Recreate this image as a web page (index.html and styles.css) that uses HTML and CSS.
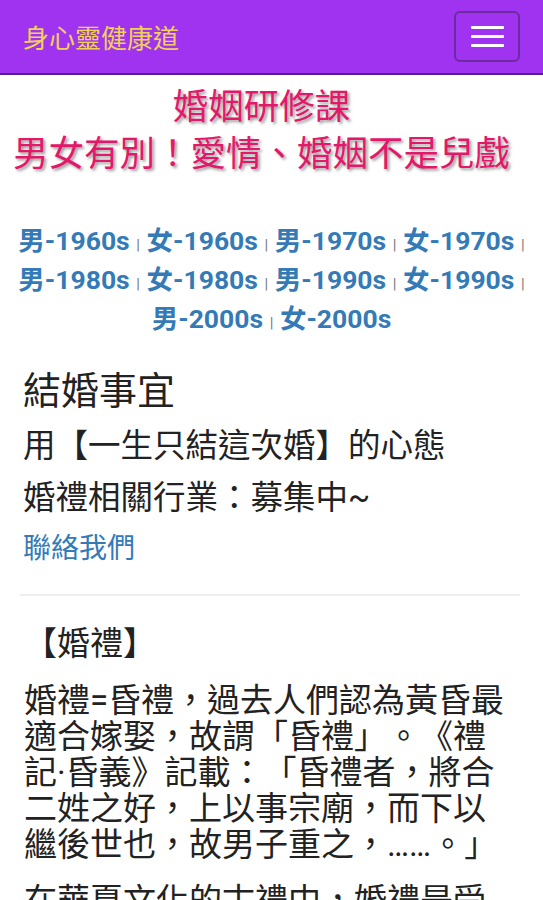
FILE: index.html
```html
<!DOCTYPE html>
<html lang="zh-Hant">
<head>
  <meta charset="UTF-8">
  <meta name="viewport" content="width=device-width, initial-scale=1">
  <title>婚姻研修課 - 身心靈健康道</title>
  <link rel="stylesheet" href="styles.css">
</head>
<body>
  <nav class="topbar">
    <a class="brand" href="#">身心靈健康道</a>
    <button class="menu-toggle" type="button" aria-label="選單">
      <span class="bar"></span>
      <span class="bar"></span>
      <span class="bar"></span>
    </button>
  </nav>

  <main class="page">
    <header class="course-title">
      <div>婚姻研修課</div>
      <div>男女有別！愛情、婚姻不是兒戲</div>
    </header>

    <div class="decade-links">
      <a href="#">男-1960s</a> <span class="sep">|</span>
      <a href="#">女-1960s</a> <span class="sep">|</span>
      <a href="#">男-1970s</a> <span class="sep">|</span>
      <a href="#">女-1970s</a> <span class="sep">|</span>
      <a href="#">男-1980s</a> <span class="sep">|</span>
      <a href="#">女-1980s</a> <span class="sep">|</span>
      <a href="#">男-1990s</a> <span class="sep">|</span>
      <a href="#">女-1990s</a> <span class="sep">|</span>
      <a href="#">男-2000s</a> <span class="sep">|</span>
      <a href="#">女-2000s</a>
    </div>

    <section class="intro">
      <h2>結婚事宜</h2>
      <p>用【一生只結這次婚】的心態</p>
      <p>婚禮相關行業：募集中~</p>
      <a class="contact" href="#">聯絡我們</a>
    </section>

    <hr class="divider">

    <section class="article">
      <h3>【婚禮】</h3>
      <p>婚禮=昏禮，過去人們認為黃昏最適合嫁娶，故謂「昏禮」。《禮記·昏義》記載：「昏禮者，將合二姓之好，上以事宗廟，而下以繼後世也，故男子重之，……。」</p>
      <p>在華夏文化的古禮中，婚禮是受到重視的一項禮儀。</p>
    </section>
  </main>
</body>
</html>
```

FILE: styles.css
```css
body {
  margin: 0;
  font-family: Roboto, "Noto Sans CJK SC", sans-serif;
  color: #222;
  background: #fff;
  text-spacing-trim: space-all;
}
a {
  color: #337ab7;
  text-decoration: none;
}

/* top bar */
.topbar {
  height: 73px;
  display: flex;
  align-items: center;
  justify-content: space-between;
  padding: 0 23px;
  background: #a033f0;
  border-bottom: 2px solid #5b1d8a;
}
.brand {
  font-family: "Noto Sans CJK SC", sans-serif;
  font-size: 26px;
  color: #f0d055;
}
.menu-toggle {
  width: 66px;
  height: 51px;
  display: flex;
  flex-direction: column;
  align-items: center;
  justify-content: center;
  gap: 6px;
  padding: 0;
  background: transparent;
  border: 2px solid #6e2aa3;
  border-radius: 6px;
}
.menu-toggle .bar {
  display: block;
  width: 33px;
  height: 3px;
  background: #fff;
  border-radius: 1px;
}

/* title */
.course-title {
  margin-top: 5px;
  padding-right: 20px;
  text-align: center;
  font-family: "Noto Sans CJK SC", sans-serif;
  font-size: 35.5px;
  line-height: 47px;
  color: #e3186b;
  text-shadow: 2px 2px 3px #999;
}

/* decade links */
.decade-links {
  margin-top: 47px;
  text-align: center;
  font-size: 26.5px;
  font-weight: bold;
  line-height: 39px;
}
.decade-links .sep {
  font-size: 15px;
  font-weight: normal;
  line-height: 1;
  color: #777;
}

/* intro block */
.intro {
  margin-top: 27px;
  padding: 0 23px;
}
.intro h2 {
  margin: 0 0 3px;
  font-size: 38px;
  font-weight: normal;
  line-height: 52px;
}
.intro p {
  margin: 0;
  font-size: 32.5px;
  line-height: 52px;
}
.intro .contact {
  display: block;
  font-size: 28px;
  line-height: 50px;
}

.divider {
  margin: 20px 23px 0 20px;
  border: 0;
  border-top: 2px solid #eee;
}

/* article */
.article {
  padding: 0 29px 0 24px;
}
.article h3 {
  margin: 28px 0 19px;
  font-size: 33px;
  font-weight: normal;
  line-height: 40px;
}
.article p {
  margin: 0 0 20px;
  font-size: 33px;
  line-height: 36px;
}
```
